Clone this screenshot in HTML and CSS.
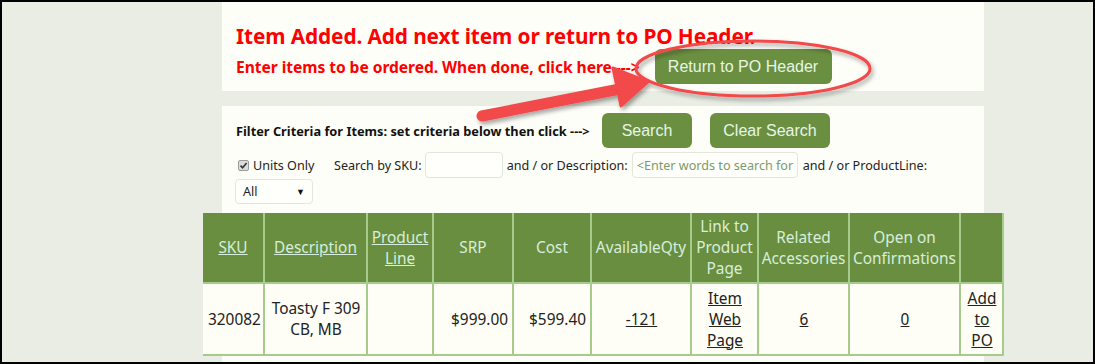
FILE: index.html
```html
<!DOCTYPE html>
<html>
<head>
<meta charset="utf-8">
<link rel="stylesheet" href="styles.css">
</head>
<body>
<div class="frame">
  <div class="panel top-panel">
    <div class="title">Item Added. Add next item or return to PO Header.</div>
    <div class="sub-row">
      <span class="sub">Enter items to be ordered. When done, click here ---&gt;</span>
      <button class="btn btn-return">Return to PO Header</button>
    </div>
  </div>
  <div class="panel filter-panel">
    <div class="filter-row">
      <span class="filter-label">Filter Criteria for Items: set criteria below then click ---&gt;</span>
      <button class="btn btn-search">Search</button>
      <button class="btn btn-clear">Clear Search</button>
    </div>
    <div class="criteria-row">
      <label class="units"><span class="check"><svg width="9" height="9" viewBox="0 0 9 9"><path d="M1.5 4.6 L3.6 6.8 L7.6 2" fill="none" stroke="#333" stroke-width="1.6"/></svg></span>Units Only</label>
      <span class="lbl sku-lbl">Search by SKU:</span>
      <span class="input sku-input"></span>
      <span class="lbl">and / or Description:</span>
      <span class="input desc-input">&lt;Enter words to search for</span>
      <span class="lbl">and / or ProductLine:</span>
    </div>
    <div class="select-row">
      <span class="select">All<span class="caret">▼</span></span>
    </div>
    <table class="items">
      <thead>
        <tr>
          <th class="c-sku"><a>SKU</a></th>
          <th class="c-desc"><a>Description</a></th>
          <th class="c-pl"><a>Product Line</a></th>
          <th class="c-srp">SRP</th>
          <th class="c-cost">Cost</th>
          <th class="c-qty">AvailableQty</th>
          <th class="c-link">Link to Product Page</th>
          <th class="c-rel">Related Accessories</th>
          <th class="c-open">Open on Confirmations</th>
          <th class="c-add"></th>
        </tr>
      </thead>
      <tbody>
        <tr>
          <td>320082</td>
          <td class="t-center">Toasty F 309 CB, MB</td>
          <td></td>
          <td class="t-right">$999.00</td>
          <td class="t-right">$599.40</td>
          <td class="t-center"><a>-121</a></td>
          <td class="t-center"><a>Item Web Page</a></td>
          <td class="t-center"><a>6</a></td>
          <td class="t-center"><a>0</a></td>
          <td class="t-center"><a>Add to PO</a></td>
        </tr>
      </tbody>
    </table>
  </div>
  <svg class="annot" width="1095" height="364" viewBox="0 0 1095 364">
    <defs>
      <filter id="sh" x="-20%" y="-20%" width="140%" height="160%">
        <feDropShadow dx="2" dy="3" stdDeviation="2" flood-color="#000" flood-opacity="0.35"/>
      </filter>
    </defs>
    <g filter="url(#sh)">
      <ellipse cx="753" cy="68.5" rx="117" ry="27.5" fill="none" stroke="#f2484b" stroke-width="3"/>
      <line x1="482" y1="116" x2="625" y2="88" stroke="#f2484b" stroke-width="11" stroke-linecap="round"/>
      <polygon points="613,68 648,82 621,106" fill="#f2484b" stroke="#f2484b" stroke-width="3" stroke-linejoin="round"/>
    </g>
  </svg>
</div>
</body>
</html>
```

FILE: styles.css
```css
html, body {
  margin: 0;
  padding: 0;
}
body {
  width: 1095px;
  height: 364px;
  overflow: hidden;
  font-family: "Noto Sans", "Open Sans", sans-serif;
}
.frame {
  position: relative;
  box-sizing: border-box;
  width: 1095px;
  height: 364px;
  border: 2px solid #000;
  background-color: #e9ede4;
  overflow: hidden;
}
.panel {
  background: #fefef8;
  margin-left: 220px;
  width: 762px;
  box-sizing: border-box;
}
.top-panel {
  height: 89px;
  padding: 20px 0 0 14px;
}
.title {
  color: #ff0000;
  font-weight: bold;
  font-size: 20.8px;
  line-height: 28px;
  letter-spacing: -0.1px;
}
.sub-row {
  display: flex;
  align-items: center;
}
.sub {
  color: #ff0000;
  font-weight: bold;
  font-size: 15.6px;
  letter-spacing: -0.05px;
}
.btn {
  font-family: "Liberation Sans", Arial, sans-serif;
  font-size: 16px;
  color: #e6f6e6;
  background: #6b8f40;
  border: none;
  border-radius: 6px;
  height: 35px;
  padding: 0;
}
.btn-return {
  width: 177px;
  margin-left: 15px;
  margin-top: -1px;
}
.filter-panel {
  margin-top: 15px;
  padding: 7px 0 0 14px;
  height: 260px;
}
.filter-row {
  display: flex;
  align-items: center;
}
.filter-label {
  font-weight: bold;
  font-size: 12.8px;
  color: #111;
  width: 366px;
  white-space: nowrap;
}
.btn-search {
  width: 90px;
}
.btn-clear {
  width: 120px;
  margin-left: 18px;
}
.criteria-row {
  display: flex;
  align-items: center;
  margin-top: 4px;
  font-size: 12.6px;
  color: #222;
}
.units {
  display: flex;
  align-items: center;
  margin-left: 2px;
  width: 96px;
}
.check {
  box-sizing: border-box;
  width: 11px;
  height: 11px;
  margin-right: 4px;
  border: 1px solid #9a9a9a;
  border-radius: 2px;
  background: #dcdcdc;
  display: inline-flex;
  align-items: center;
  justify-content: center;
}
.lbl {
  white-space: nowrap;
}
.sku-lbl {
  margin-right: 3px;
}
.input {
  box-sizing: border-box;
  height: 26px;
  border: 1px solid #e3e6dc;
  border-radius: 4px;
  background: #fffffb;
  display: inline-flex;
  align-items: center;
}
.sku-input {
  width: 78px;
  margin-right: 4px;
}
.desc-input {
  width: 166px;
  margin: 0 5px 0 4px;
  padding-left: 4px;
  color: #7a9a6a;
  white-space: nowrap;
  overflow: hidden;
}
.select-row {
  margin-top: 1px;
  margin-left: -1px;
}
.select {
  box-sizing: border-box;
  display: inline-flex;
  align-items: center;
  justify-content: space-between;
  width: 78px;
  height: 25px;
  border: 1px solid #e3e6dc;
  border-radius: 4px;
  padding: 0 7px 0 7px;
  font-size: 12.6px;
  color: #222;
  background: #fffffb;
}
.caret {
  font-size: 9px;
  color: #111;
}
.items {
  margin-left: -33px;
  margin-top: 9px;
  width: 801px;
  border-collapse: collapse;
  font-size: 15.4px;
  table-layout: fixed;
}
.items th, .items td {
  border: 2px solid #a6cc8c;
  line-height: 21px;
}
.items th {
  background: #6a8e3f;
  color: #d7eedc;
  font-weight: normal;
  height: 69px;
  padding: 0 2px;
  text-align: center;
}
.items td {
  background: #fefef6;
  color: #222;
  height: 70px;
  padding: 0 4px 0 5px;
  vertical-align: middle;
}
.items tr > :first-child { border-left: none; }
.items thead th { border-top: none; }
.items a {
  text-decoration: underline;
  color: inherit;
}
.items td a { color: #222; }
.t-center { text-align: center; }
.t-right { text-align: right; }
.c-sku { width: 56px; }
.c-desc { width: 97px; }
.c-pl { width: 60px; }
.c-srp { width: 74px; }
.c-cost { width: 72px; }
.c-qty { width: 94px; }
.c-link { width: 61px; }
.c-rel { width: 85px; }
.c-open { width: 105px; }
.c-add { width: 37px; }
.annot {
  position: absolute;
  left: -2px;
  top: -2px;
  pointer-events: none;
}
```
